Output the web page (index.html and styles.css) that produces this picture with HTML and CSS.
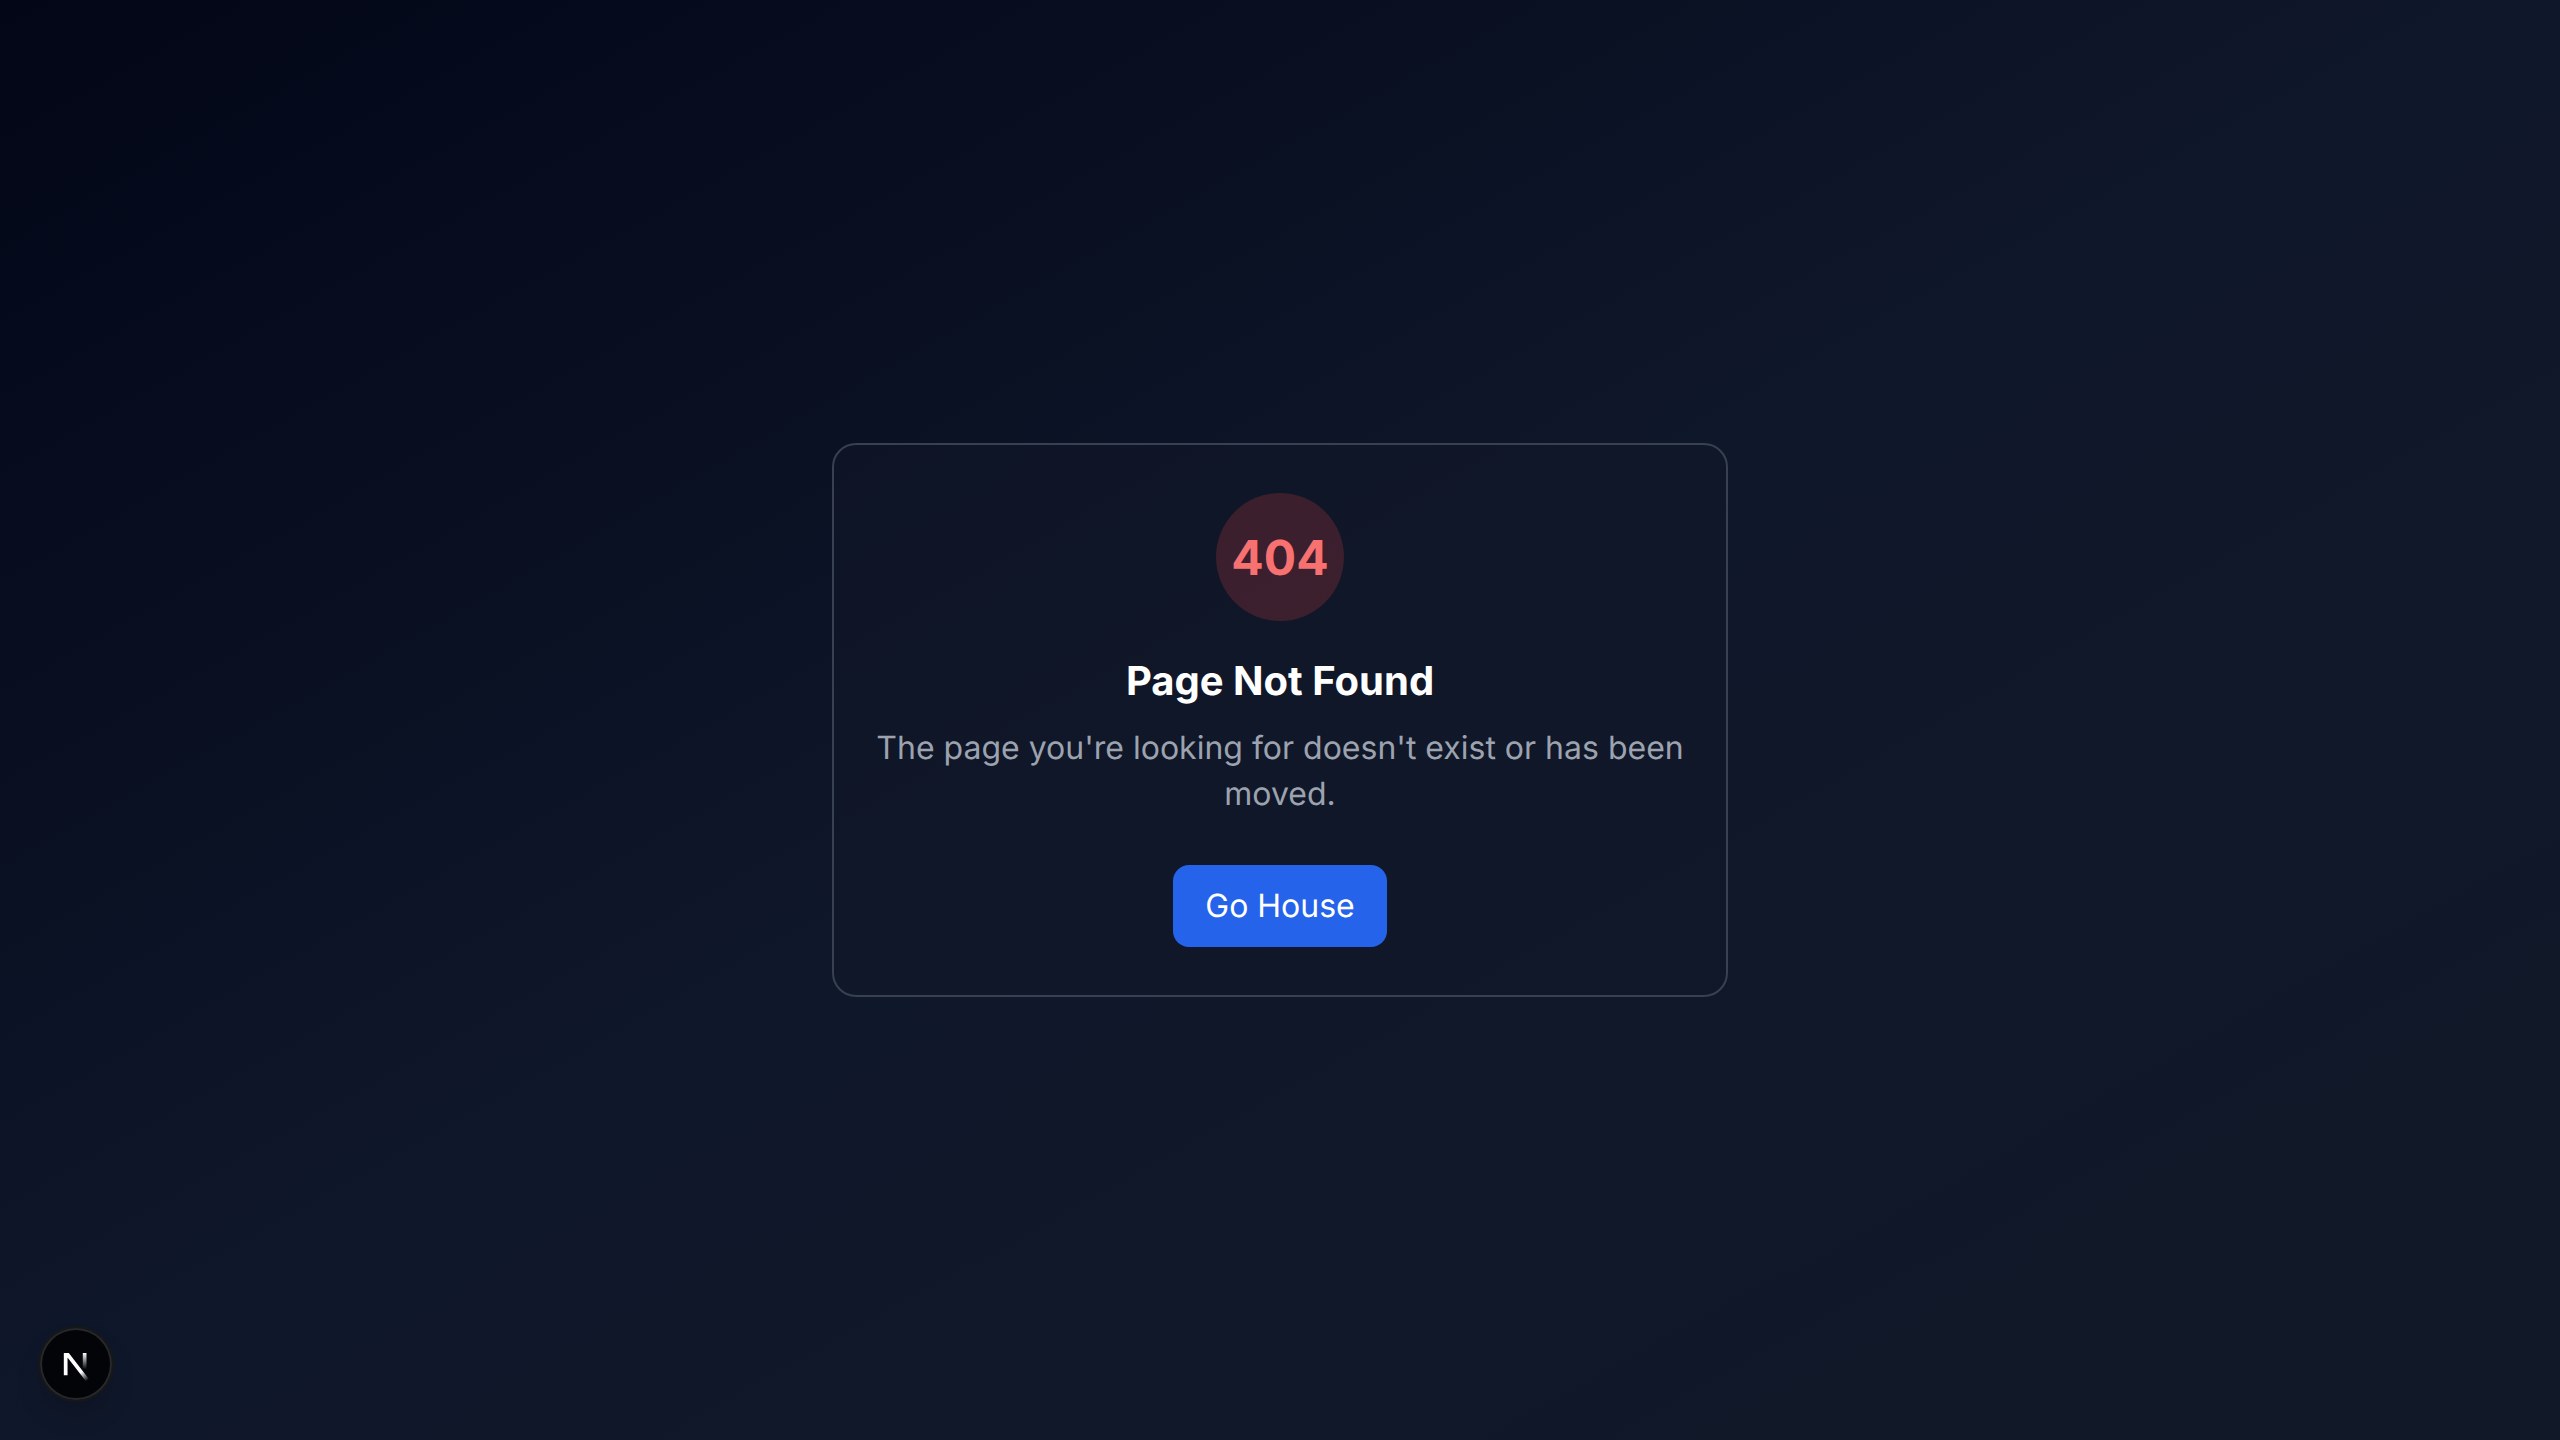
FILE: index.html
```html
<!DOCTYPE html>
<html lang="en">
<head>
<meta charset="utf-8">
<title>Page Not Found</title>
<link rel="stylesheet" href="styles.css">
</head>
<body>
<main class="page">
  <section class="card">
    <div class="code">404</div>
    <h1 class="title">Page Not Found</h1>
    <p class="message">The page you're looking for doesn't exist or has been moved.</p>
    <a class="home" href="/">Go House</a>
  </section>
</main>
<button class="devtools" type="button" aria-label="Open Next.js Dev Tools">
  <svg class="devtools-mark" viewBox="0 0 72 72" fill="none" aria-hidden="true">
    <defs>
      <linearGradient id="diagonal" x1="9.95555" y1="11.1226" x2="15.4778" y2="17.9671" gradientUnits="userSpaceOnUse"><stop stop-color="white"/><stop offset="0.604" stop-color="white" stop-opacity="0"/><stop offset="1" stop-color="white" stop-opacity="0"/></linearGradient>
      <linearGradient id="stem" x1="11.8222" y1="1.40039" x2="11.791" y2="9.62542" gradientUnits="userSpaceOnUse"><stop stop-color="white"/><stop offset="1" stop-color="white" stop-opacity="0"/></linearGradient>
      <clipPath id="mark-area"><rect x="0" y="1.5" width="16" height="16"/></clipPath>
    </defs>
    <g transform="translate(21 22) scale(2)" clip-path="url(#mark-area)">
      <path d="M13.3 15.2L2.34 1V12.6" stroke="url(#diagonal)" stroke-width="1.86"/>
      <path d="M11.825 1.5V13.1" stroke="url(#stem)" stroke-width="1.86"/>
    </g>
  </svg>
</button>
</body>
</html>
```
FILE: styles.css
```css
* { box-sizing: border-box; margin: 0; }
body {
  font-family: Inter, sans-serif;
  color: #fff;
  text-rendering: geometricPrecision;
}
.page {
  min-height: 100vh;
  display: flex;
  align-items: center;
  justify-content: center;
  padding: 32px;
  background: linear-gradient(to bottom right, #020617, #0f172a, #111827);
}
.card {
  width: 100%;
  max-width: 896px;
  padding: 48px 40px;
  display: flex;
  flex-direction: column;
  align-items: center;
  text-align: center;
  border: 2px solid #374151;
  border-radius: 24px;
  background: rgba(17, 24, 39, 0.5);
}
.code {
  width: 128px;
  height: 128px;
  margin-bottom: 32px;
  display: flex;
  align-items: center;
  justify-content: center;
  border-radius: 50%;
  background: rgba(239, 68, 68, 0.2);
  color: #f87171;
  font-size: 48px;
  font-weight: 700;
}
.title { margin-bottom: 16px; font-size: 40px; line-height: 56px; font-weight: 700; }
.message { margin-bottom: 48px; color: #9ca3af; font-size: 32px; line-height: 46px; }
.home {
  padding: 18px 32px;
  border-radius: 16px;
  background: #2563eb;
  color: #fff;
  font-size: 32px;
  line-height: 46px;
  text-decoration: none;
}
.devtools {
  position: fixed;
  left: 40px;
  bottom: 40px;
  width: 72px;
  height: 72px;
  padding: 0;
  border: 0;
  border-radius: 50%;
  background: rgba(0, 0, 0, 0.8);
  box-shadow:
    0 0 0 2px #171717,
    inset 0 0 0 2px rgba(255, 255, 255, 0.14),
    0 16px 32px -8px rgba(0, 0, 0, 0.24);
}
.devtools-mark { display: block; width: 72px; height: 72px; }
```
